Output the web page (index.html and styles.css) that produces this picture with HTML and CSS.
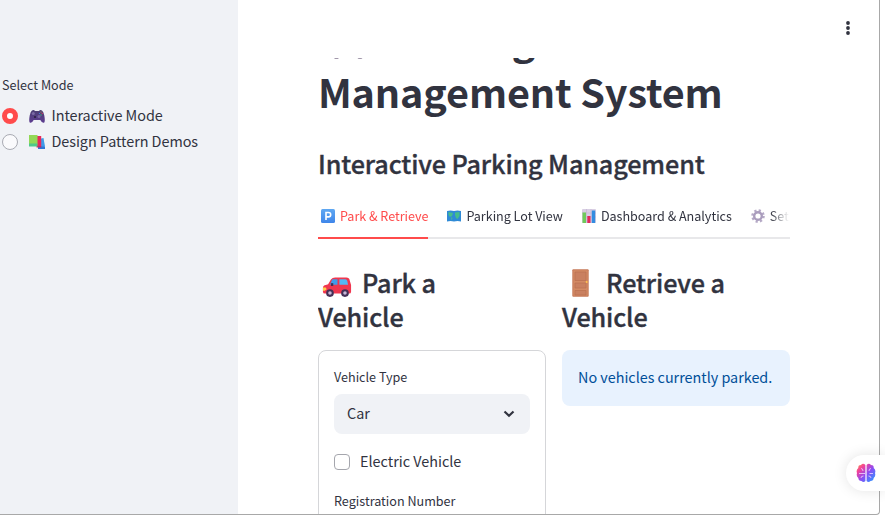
FILE: index.html
```html
<!DOCTYPE html>
<html lang="en">
<head>
<meta charset="utf-8">
<title>Parking Lot Management System</title>
<link rel="stylesheet" href="styles.css">
</head>
<body>
<svg class="defs" aria-hidden="true">
  <defs>
    <linearGradient id="pad" x1="0" y1="0" x2="0" y2="1"><stop offset="0" stop-color="#4b3f74"/><stop offset="1" stop-color="#5e3d91"/></linearGradient>
    <linearGradient id="blue" x1="0" y1="0" x2="0" y2="1"><stop offset="0" stop-color="#5fa8f2"/><stop offset="1" stop-color="#3f86ea"/></linearGradient>
    <linearGradient id="brain" x1="0" y1="0" x2="1" y2="1"><stop offset="0" stop-color="#ff9a3c"/><stop offset=".25" stop-color="#f2419c"/><stop offset=".55" stop-color="#8a4df5"/><stop offset="1" stop-color="#1fa2ff"/></linearGradient>
    <symbol id="car" viewBox="0 0 32 32">
      <path d="M9.500 9Q11 7 14 7h12q3 0 3.600 3l1.400 5v7q0 2-2 2H3q-2 0-2-2v-4q0-2.500 3-3l2.500-1z" fill="#f0364f"/>
      <path d="M11 8.700h5.500v6H8.500z" fill="#3f9cea"/><path d="M18.500 8.700h6.500q1.500 0 2 2l.8 4h-9.300z" fill="#52b7f3"/>
      <path d="M9.500 13h2.500v3H9.500z" fill="#443056"/><path d="M1 17.500h3l1 2-2 1.500H1z" fill="#ffd04a"/>
      <circle cx="8.500" cy="23.500" r="4.100" fill="#443056"/><circle cx="8.500" cy="23.500" r="1.900" fill="#c7b6d6"/>
      <circle cx="24.500" cy="23.500" r="4.100" fill="#443056"/><circle cx="24.500" cy="23.500" r="1.900" fill="#c7b6d6"/>
    </symbol>
  </defs>
</svg>
<div class="window">
  <aside class="sidebar">
    <p class="label">Select Mode</p>
    <div class="option">
      <span class="radio checked"></span>
      <svg class="emoji16" viewBox="0 0 16 16"><path d="M3 2.500Q5 1.500 6 3h4q1-1.500 3-.5 1.500 1 2.300 5 1 5.500 0 7-2 1.200-4-2.500H4.700q-2 3.700-4 2.500-1-1.500 0-7Q1.500 3.500 3 2.500z" fill="url(#pad)"/><circle cx="4.300" cy="5.500" r="1.500" fill="#7b6ba5"/><circle cx="10" cy="8.500" r="1.500" fill="#7565a3"/><path d="M5 8h2v2H5z" fill="#30264d"/><circle cx="12" cy="4" r=".6" fill="#c9963c"/><circle cx="13.300" cy="5.500" r=".7" fill="#c8435a"/><circle cx="12" cy="7" r=".7" fill="#38c278"/><circle cx="10.500" cy="5.500" r=".6" fill="#3d87e8"/></svg>
      <span>Interactive Mode</span>
    </div>
    <div class="option">
      <span class="radio"></span>
      <svg class="emoji16" viewBox="0 0 16 16"><path d="M10 5l4.500-1 1.500 8.500-4 1.500z" fill="#3f9ae8"/><path d="M9 12.500h7V15H9z" fill="#2c77d8"/><path d="M7.500 2h4.700v10.500l-4.700 1z" fill="#e8285b"/><path d="M8.500 12h3.700v1.500H8.500z" fill="#b92d67"/><path d="M0 1h8.500v9.500H0z" fill="#93d856"/><path d="M0 9.500h8.500V12.500H0z" fill="#4fc98a"/></svg>
      <span>Design Pattern Demos</span>
    </div>
  </aside>
  <main class="main">
    <header class="toolbar">
      <svg class="kebab" viewBox="0 0 6 16"><circle cx="3" cy="3" r="1.900"/><circle cx="3" cy="8" r="1.900"/><circle cx="3" cy="13" r="1.900"/></svg>
    </header>
    <div class="scroller">
      <h1><svg class="car-title"><use href="#car"/></svg>Parking Lot<br>Management System</h1>
      <h2>Interactive Parking Management</h2>
      <nav class="tabs">
        <div class="tab active">
          <svg class="emoji14" viewBox="0 0 14 14"><rect width="14" height="14" rx="1.500" fill="url(#blue)"/><path d="M5 11V3.500h2.500a2.200 2.200 0 0 1 0 4.400H5" fill="none" stroke="#fff" stroke-width="1.600"/></svg>
          <span>Park &amp; Retrieve</span>
        </div>
        <div class="tab">
          <svg class="emoji14" viewBox="0 0 14 14"><path d="M0 2l3.500-.5L7 2l3.500-.5L14 2v10.500l-3.500-.5-3.500.5-3.500-.5-3.500.5z" fill="#2f8ad6"/><path d="M1.500 3l4.500 1-1 3-2 1-1.500-2zM4 8l1.500 1-1 2.500zM8 3.500l4.500-.5v4l-2 3-1.500-1-1-3z" fill="#45bd8c"/></svg>
          <span>Parking Lot View</span>
        </div>
        <div class="tab">
          <svg class="emoji14" viewBox="0 0 14 14"><rect width="14" height="14" rx="1" fill="#d8cee3"/><path d="M0 4h14M0 8h14M4.500 0v14M9 0v14" stroke="#bcaccc" stroke-width=".5"/><path d="M.5 3.500H4V14H.5z" fill="#6fca5b"/><path d="M5.300 7H8.500v7H5.300z" fill="#e4285a"/><path d="M9.800 1.500h3.400V14H9.800z" fill="#328ce0"/></svg>
          <span>Dashboard &amp; Analytics</span>
        </div>
        <div class="tab">
          <svg class="emoji14" viewBox="0 0 14 14"><circle cx="7" cy="7" r="5.600" fill="none" stroke="#b5a9c6" stroke-width="2.400" stroke-dasharray="2.200 2.198"/><circle cx="7" cy="7" r="3.800" fill="none" stroke="#aa9dbd" stroke-width="2.400"/></svg>
          <span>Settings</span>
        </div>
      </nav>
      <div class="columns">
        <section>
          <h3><svg class="car-head"><use href="#car"/></svg>Park a<br>Vehicle</h3>
          <form class="card">
            <label class="label">Vehicle Type</label>
            <div class="select"><span>Car</span><svg class="chevron" viewBox="0 0 12 8"><path d="M1.500 1.500L6 5.800l4.500-4.300" fill="none" stroke="#31333f" stroke-width="2.200"/></svg></div>
            <div class="check"><span class="box"></span><span class="check-text">Electric Vehicle</span></div>
            <label class="label reg">Registration Number</label>
          </form>
        </section>
        <section>
          <h3><svg class="door" viewBox="0 0 17 28"><rect x=".3" y=".3" width="16.400" height="27.400" rx="1" fill="#c67a58"/><rect x="1.300" y="1.300" width="14.400" height="25.400" fill="#d38a64"/><path d="M3 3h11v8.500H3zM3 14h11v5H3zM3 21.500h11V26H3z" fill="#c98060" stroke="#ba7050" stroke-width=".7"/><circle cx="14.700" cy="13" r="1" fill="#ffc24c"/></svg>Retrieve a<br>Vehicle</h3>
          <div class="info">No vehicles currently parked.</div>
        </section>
      </div>
    </div>
  </main>
</div>
<div class="assistant">
  <svg viewBox="0 0 20 20"><path d="M9.400 2Q7-.3 5 2 2 2 2.300 5-.2 7 1 10q-1 3 1.300 5 .2 3 3.200 3 2 2 3.900 0zM10.600 2Q13-.3 15 2q3 0 2.700 3 2.500 2 1.300 5 1 3-1.300 5-.2 3-3.200 3-2 2-3.900 0z" fill="url(#brain)"/><path d="M5 5.500q2 0 2 2.500M3 10.500h6M5 15q0-2 2.500-2M15 5.500q-2 0-2 2.500M17 10.500h-3.500M15 15q0-2-2.500-2" fill="none" stroke="#f3d8ff" stroke-width=".8"/></svg>
</div>
</body>
</html>
```

FILE: styles.css
```css
* { box-sizing: border-box; }
body {
  margin: 0;
  width: 885px;
  height: 515px;
  overflow: hidden;
  background: #fff;
  color: #31333f;
  font-family: "Noto Sans CJK SC", "Noto Sans", sans-serif;
  font-size: 14.4px;
  letter-spacing: -.05px;
}
p, h1, h2, h3 { margin: 0; }
svg { flex: none; }
.defs { position: absolute; width: 0; height: 0; }
.window {
  display: flex;
  width: 880px;
  height: 515px;
  border: solid #a8a8a8;
  border-width: 0 1px 1px 0;
  border-bottom-right-radius: 4px;
  overflow: hidden;
}
.sidebar {
  width: 238px;
  flex: none;
  padding: 75px 0 0 2px;
  background: #f0f2f6;
}
.label { display: block; font-size: 12.6px; line-height: 20px; letter-spacing: 0; }
.sidebar .label { margin-bottom: 8px; }
.option { display: flex; align-items: center; height: 26px; white-space: nowrap; }
.option span:last-child { line-height: 22px; padding-bottom: 2px; margin-left: -.5px; }
.radio {
  width: 16px;
  height: 16px;
  flex: none;
  border: 1px solid #a9abb3;
  border-radius: 50%;
  background: #fafafc;
}
.radio.checked { border: 5px solid #ff4b4b; background: #fff; }
.emoji16 { width: 16px; height: 16px; margin: 0 7px 0 11px; }
.main { flex: 1; min-width: 0; display: flex; flex-direction: column; }
.toolbar { height: 58px; flex: none; display: flex; justify-content: flex-end; padding: 20px 28px 0 0; }
.kebab { width: 6px; height: 16px; fill: #31333f; }
.scroller { width: 472px; margin-left: 80px; flex: 1; min-height: 0; overflow: hidden; }
h1 {
  height: 105.6px;
  margin-top: -46.5px;
  font-size: 39.6px;
  line-height: 52.8px;
  font-weight: 700;
  letter-spacing: -.15px;
  white-space: nowrap;
}
.car-title { width: 47px; height: 47px; margin: -10px 15px 0 6px; vertical-align: -10px; }
h2 { margin-top: 29px; }
h2, h3 {
  font-size: 25.2px;
  line-height: 34px;
  font-weight: 500;
  letter-spacing: -.12px;
  -webkit-text-stroke: .35px #31333f;
  white-space: nowrap;
}
.tabs {
  display: flex;
  gap: 16px;
  height: 44px;
  margin-top: 15px;
  font-size: 12.6px;
  line-height: 41px;
  letter-spacing: -.025px;
  overflow: hidden;
  white-space: nowrap;
  box-shadow: inset 0 -2px #e8e8ea;
  -webkit-mask-image: linear-gradient(#000, #000), linear-gradient(90deg, #000 452px, transparent 471px);
  -webkit-mask-size: 100% 2px, 100% 42px;
  -webkit-mask-position: 0 100%, 0 0;
  -webkit-mask-repeat: no-repeat;
}
.tab { display: flex; flex: none; padding-left: 3px; }
.tab.active { color: #ff4b4b; border-bottom: 2px solid #ff4b4b; }
.emoji14 { width: 14px; height: 14px; margin: 14px 5px 0 0; }
.columns { display: grid; grid-template-columns: 228px 228px; gap: 16px; margin-top: 26px; }
h3 { height: 68px; }
.car-head { width: 30px; height: 30px; margin: -10px 10px -2px 4px; vertical-align: -8px; }
.door { width: 17px; height: 28px; margin: -10px 17px 0 10px; vertical-align: -4px; }
.card { margin-top: 17px; height: 300px; padding: 16px 15px; border: 1px solid #d5d6d9; border-radius: 8px; }
.select {
  display: flex;
  justify-content: space-between;
  align-items: center;
  height: 40px;
  margin-top: 7px;
  padding: 0 15px 3px 13px;
  border-radius: 8px;
  background: #f0f2f6;
}
.chevron { width: 12px; height: 8px; margin-top: 3px; }
.check { display: flex; align-items: center; height: 16px; margin-top: 20px; letter-spacing: 0; white-space: nowrap; }
.box { width: 16px; height: 16px; margin-right: 10px; border: 1px solid #a5a6ad; border-radius: 4px; }
.check-text { padding-bottom: 4px; }
.reg { margin-top: 21px; }
.car-head { vertical-align: -6px; }
.info {
  margin-top: 17px;
  height: 56px;
  padding-left: 16px;
  line-height: 54px;
  letter-spacing: -.02px;
  border-radius: 8px;
  background: #e8f2fe;
  color: #004f99;
  white-space: nowrap;
}
.assistant {
  position: absolute;
  left: 846px;
  top: 455px;
  width: 39px;
  height: 36px;
  padding: 8px 0 0 10px;
  border-radius: 18px 0 0 18px;
  background: #fff;
  box-shadow: 0 0 14px rgba(0, 0, 0, .11);
}
.assistant svg { display: block; width: 20px; height: 20px; }
```
